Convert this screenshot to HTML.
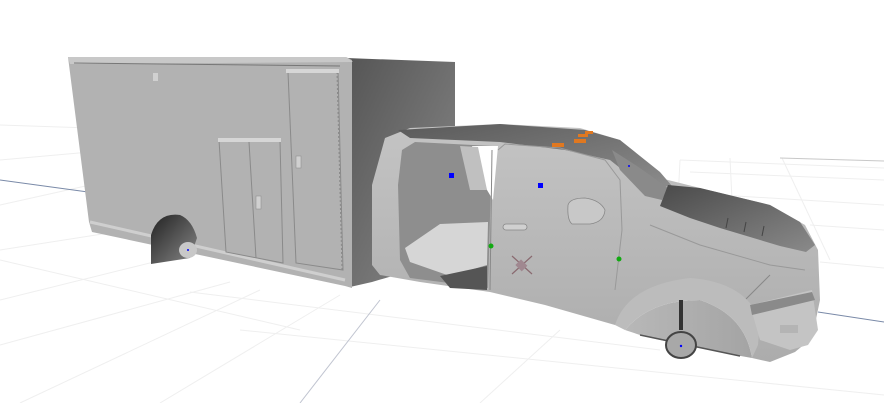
<!DOCTYPE html>
<html><head><meta charset="utf-8"><style>
html,body{margin:0;padding:0;background:#fff;width:884px;height:403px;overflow:hidden}
svg{display:block}
</style></head><body>
<svg width="884" height="403" viewBox="0 0 884 403" xmlns="http://www.w3.org/2000/svg">
<defs>
<linearGradient id="endf" x1="0" y1="0" x2="1" y2="1"><stop offset="0" stop-color="#555"/><stop offset="1" stop-color="#8a8a8a"/></linearGradient>
<linearGradient id="roof" x1="0" y1="0" x2="1" y2="1"><stop offset="0" stop-color="#5a5a5a"/><stop offset="1" stop-color="#8c8c8c"/></linearGradient>
<linearGradient id="hood" x1="0" y1="0" x2="1" y2="1"><stop offset="0" stop-color="#4a4a4a"/><stop offset="1" stop-color="#8a8a8a"/></linearGradient>
<linearGradient id="arch" x1="0" y1="0" x2="1" y2="1"><stop offset="0" stop-color="#222"/><stop offset="1" stop-color="#888"/></linearGradient>
<linearGradient id="cab" x1="0" y1="0" x2="0" y2="1"><stop offset="0" stop-color="#c4c4c4"/><stop offset="1" stop-color="#acacac"/></linearGradient>
<linearGradient id="inner" x1="0" y1="0" x2="1" y2="0"><stop offset="0" stop-color="#b8b8b8"/><stop offset="1" stop-color="#a4a4a4"/></linearGradient>
</defs>
<g stroke="#efefef" stroke-width="1" fill="none">
<line x1="0" y1="160" x2="90" y2="152"/><line x1="0" y1="205" x2="90" y2="185"/>
<line x1="0" y1="250" x2="160" y2="225"/><line x1="0" y1="300" x2="170" y2="258"/><line x1="0" y1="345" x2="230" y2="282"/>
<line x1="0" y1="125" x2="90" y2="128"/><line x1="0" y1="260" x2="300" y2="330"/>
<line x1="20" y1="403" x2="260" y2="290"/><line x1="160" y1="403" x2="340" y2="295"/>
<line x1="480" y1="403" x2="560" y2="330"/>
<line x1="190" y1="292" x2="660" y2="350"/><line x1="240" y1="330" x2="884" y2="395"/>
<line x1="680" y1="160" x2="884" y2="168"/><line x1="690" y1="172" x2="884" y2="180"/><line x1="720" y1="195" x2="884" y2="205"/>
<line x1="810" y1="225" x2="884" y2="230"/><line x1="820" y1="262" x2="884" y2="268"/>
<line x1="680" y1="160" x2="678" y2="200"/><line x1="730" y1="158" x2="732" y2="200"/><line x1="782" y1="158" x2="830" y2="260"/>
</g>
<line x1="780" y1="158" x2="884" y2="161" stroke="#c8c8c8" stroke-width="1"/>
<line x1="0" y1="180" x2="88" y2="192" stroke="#7a8aa8" stroke-width="1"/>
<line x1="818" y1="312" x2="884" y2="322" stroke="#7a8aa8" stroke-width="1"/>
<line x1="380" y1="300" x2="300" y2="403" stroke="#c0c4d0" stroke-width="1"/>
<polygon points="346,58 455,62 455,200 440,262 372,282 350,287" fill="url(#endf)"/>
<polygon points="68,57 346,57 352,60 352,288 345,286 92,232 89,222" fill="#b2b2b2"/>
<polygon points="68,57 346,57 353,62 70,64" fill="#c8c8c8"/>
<line x1="74" y1="63" x2="340" y2="66" stroke="#777" stroke-width="1"/>
<line x1="90" y1="222" x2="345" y2="280" stroke="#cfcfcf" stroke-width="3"/>
<g fill="none" stroke="#8a8a8a" stroke-width="1">
<polygon points="219,140 280,141 283,263 226,252"/>
<line x1="249" y1="142" x2="256" y2="258"/>
<polygon points="288,72 338,71 343,270 296,263"/>
<line x1="337" y1="72" x2="342" y2="270" stroke-dasharray="2,2"/>
</g>
<rect x="218" y="138" width="63" height="4" fill="#d6d6d6"/>
<rect x="286" y="69" width="53" height="4" fill="#d6d6d6"/>
<rect x="296" y="156" width="5" height="12" fill="#d0d0d0" stroke="#888" stroke-width=".5"/>
<rect x="256" y="196" width="5" height="13" fill="#d0d0d0" stroke="#888" stroke-width=".5"/>
<rect x="153" y="73" width="5" height="8" fill="#d0d0d0"/>
<path d="M151,264 L151,235 Q158,212 180,215 Q192,220 197,238 L190,258 Z" fill="url(#arch)"/>
<ellipse cx="188" cy="250" rx="9" ry="8" fill="#c8c8c8"/>
<circle cx="188" cy="250" r="1" fill="#00f"/>
<polygon points="372,185 385,138 410,128 500,124 580,128 620,140 660,178 700,188 770,205 805,225 818,250 820,300 812,338 795,352 770,362 752,358 748,330 730,300 700,285 660,290 630,305 615,325 545,305 490,292 420,282 380,275 372,265" fill="url(#cab)"/>
<!-- inner fender fill -->
<path d="M625,330 Q650,300 700,300 Q745,315 752,358 L735,355 Q700,348 660,340 L640,335Z" fill="url(#inner)"/>
<polygon points="398,130 500,124 585,130 620,140 660,172 672,186 645,188 610,160 565,150 500,142 410,138" fill="url(#roof)"/>
<polygon points="612,150 640,168 668,188 662,200 645,196 620,170" fill="#8a8a8a"/>
<polygon points="668,185 700,188 770,205 800,222 815,245 806,252 780,246 720,228 690,218 660,206" fill="url(#hood)"/>
<g stroke="#444" stroke-width="1"><line x1="728" y1="218" x2="726" y2="228"/><line x1="746" y1="222" x2="744" y2="232"/><line x1="764" y1="226" x2="762" y2="236"/></g>
<polyline points="650,225 700,245 770,265 805,270" fill="none" stroke="#999" stroke-width="1"/>
<polyline points="740,305 770,275" fill="none" stroke="#888" stroke-width="1"/>
<polygon points="402,150 415,142 492,146 488,288 410,278 400,260 398,185" fill="#8e8e8e"/>
<polygon points="472,146 498,146 493,200 487,190" fill="#fff"/>
<polygon points="460,146 478,147 487,190 470,190" fill="#c0c0c0"/>
<polygon points="405,248 440,224 488,222 487,265 450,276 410,262" fill="#d6d6d6"/>
<polygon points="440,276 487,266 487,290 450,288" fill="#555"/>
<polyline points="498,150 505,144 560,148 605,160 620,180 622,230 615,290" fill="none" stroke="#999" stroke-width="1"/>
<line x1="492" y1="150" x2="490" y2="290" stroke="#888"/>
<path d="M568,205 Q570,198 585,198 Q600,200 605,210 Q604,222 590,224 L572,224 Q567,220 568,205Z" fill="#c8c8c8" stroke="#888" stroke-width=".8"/>
<rect x="503" y="224" width="24" height="6" rx="3" fill="#d0d0d0" stroke="#888" stroke-width=".8"/>
<path d="M615,325 Q628,285 690,278 Q745,282 760,320 L758,345 L752,358 Q745,315 700,300 Q650,300 625,330Z" fill="#bcbcbc"/>
<path d="M750,305 L812,290 L818,330 L808,345 L790,350 L760,340Z" fill="#c4c4c4"/>
<polygon points="750,305 812,292 815,300 752,315" fill="#8a8a8a"/>
<rect x="780" y="325" width="18" height="8" fill="#b4b4b4"/>
<line x1="640" y1="335" x2="740" y2="356" stroke="#555" stroke-width="1.5"/>
<rect x="679" y="300" width="4" height="30" fill="#333"/>
<ellipse cx="681" cy="345" rx="15" ry="13" fill="#a8a8a8" stroke="#444" stroke-width="2"/>
<circle cx="681" cy="346" r="1.2" fill="#00f"/>
<g fill="#e07820"><rect x="552" y="143" width="12" height="4"/><rect x="574" y="139" width="12" height="4"/><rect x="578" y="134" width="10" height="3"/><rect x="585" y="131" width="8" height="3"/></g>
<rect x="449" y="173" width="5" height="5" fill="#00f"/>
<rect x="538" y="183" width="5" height="5" fill="#00f"/>
<circle cx="629" cy="166" r="1" fill="#00f"/>
<circle cx="491" cy="246" r="2.5" fill="#1a1"/>
<circle cx="619" cy="259" r="2.5" fill="#1a1"/>
<g stroke="#8a6a70" stroke-width="1.2"><line x1="512" y1="256" x2="532" y2="274"/><line x1="532" y1="256" x2="512" y2="274"/></g>
<rect x="517" y="261" width="9" height="8" fill="#a08890" transform="rotate(45 521 265)"/>
</svg>
</body></html>
